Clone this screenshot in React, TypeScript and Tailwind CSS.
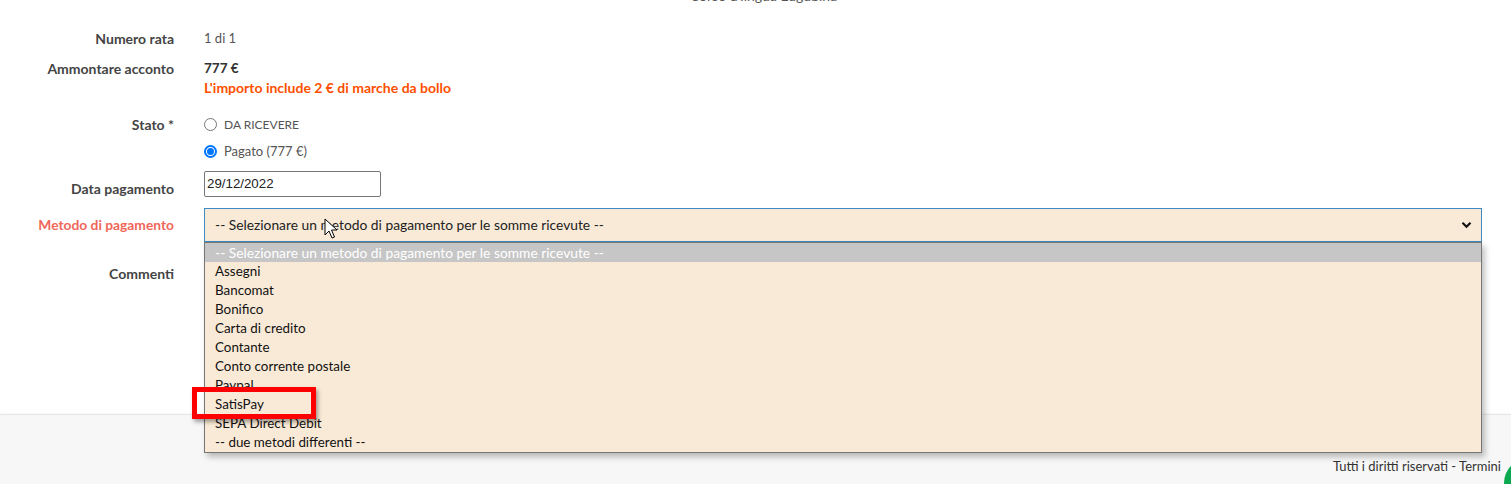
import React from "react";

const options = [
  "-- Selezionare un metodo di pagamento per le somme ricevute --",
  "Assegni",
  "Bancomat",
  "Bonifico",
  "Carta di credito",
  "Contante",
  "Conto corrente postale",
  "Paypal",
  "SatisPay",
  "SEPA Direct Debit",
  "-- due metodi differenti --",
];

function Label({ children, red }: { children: React.ReactNode; red?: boolean }) {
  return (
    <div
      className={
        red
          ? "w-[174px] shrink-0 text-right font-bold text-[13.8px] leading-[19px] text-[#f0675a]"
          : "w-[174px] shrink-0 text-right font-bold text-[14px] leading-[19px] text-[#444444]"
      }
    >
      {children}
    </div>
  );
}

export default function App() {
  return (
    <div className="relative w-[1511px] h-[484px] overflow-hidden bg-white font-['Lato',sans-serif] text-[13px] text-[#444]">
      <div className="h-[414px] flex flex-col">
        <div className="-mt-[14px] h-[19px] text-center text-[14px] leading-[19px] text-[#555] pl-[16px]">
          Corso d'lingua Eugubina
        </div>

        {/* Numero rata */}
        <div className="flex mt-[24px]">
          <Label>Numero rata</Label>
          <div className="ml-[30px] leading-[19px] text-[#555]">1 di 1</div>
        </div>

        {/* Ammontare */}
        <div className="flex mt-[11px]">
          <Label>Ammontare acconto</Label>
          <div className="ml-[30px] flex flex-col">
            <div className="leading-[19px] font-bold text-[13.5px] text-[#333]">777 €</div>
            <div className="leading-[19px] font-bold text-[14px] text-[#ff4f00]">
              L'importo include 2 € di marche da bollo
            </div>
          </div>
        </div>

        {/* Stato */}
        <div className="flex mt-[18px]">
          <Label>Stato *</Label>
          <div className="ml-[30px] flex flex-col">
            <div className="flex items-center h-[19px] gap-[7px]">
              <div className="w-[13px] h-[13px] rounded-full border border-[#767676] bg-white" />
              <span className="text-[12px] text-[#555]">DA RICEVERE</span>
            </div>
            <div className="flex items-center h-[19px] gap-[7px] mt-[8px]">
              <div className="w-[13px] h-[13px] rounded-full border-2 border-[#0075ff] bg-white flex items-center justify-center">
                <div className="w-[7px] h-[7px] rounded-full bg-[#0075ff]" />
              </div>
              <span className="text-[#555]">Pagato (777 €)</span>
            </div>
          </div>
        </div>

        {/* Data pagamento */}
        <div className="flex mt-[10px] h-[26px]">
          <div className="pt-[8px]">
            <Label>Data pagamento</Label>
          </div>
          <div className="ml-[30px]">
            <div className="w-[177px] h-[26px] border border-[#767676] rounded-[2px] pl-[2px] flex items-center font-['Liberation_Sans',sans-serif] text-[13.3px] text-[#222]">
              29/12/2022
            </div>
          </div>
        </div>

        {/* Metodo */}
        <div className="flex mt-[11px]">
          <div className="pt-[7px]">
            <Label red>Metodo di pagamento</Label>
          </div>
          <div className="ml-[30px] w-[1278px] relative z-10">
            <div className="h-[34px] bg-[#f9ead7] border border-[#3b8bc6] flex items-center pl-[10px] pr-[9px] text-[13.8px] text-[#222]">
              <span className="flex-1">-- Selezionare un metodo di pagamento per le somme ricevute --</span>
              <svg width="11" height="8" viewBox="0 0 11 8">
                <path d="M1.5 1.8 L5.5 5.8 L9.5 1.8" stroke="#111" strokeWidth="2.2" fill="none" />
              </svg>
            </div>
            <div className="absolute left-0 right-0 top-full bg-[#f9ead7] border border-[#767676] shadow-[3px_4px_6px_rgba(0,0,0,0.25)] text-[13.4px] text-[#111]">
              {options.map((o, i) => (
                <div
                  key={o}
                  className={
                    i === 0
                      ? "h-[19px] leading-[19px] pl-[10px] bg-[#c6c6c6] text-white text-[13.8px]"
                      : "h-[19px] leading-[19px] pl-[10px]"
                  }
                >
                  {o}
                </div>
              ))}
            </div>
            {/* cursor */}
            <svg className="absolute left-[120px] top-[10px]" width="14" height="22" viewBox="0 0 14 22">
              <path d="M1 1 L1 17 L5 13 L8 20 L10.5 19 L7.5 12 L13 12 Z" fill="#fff" stroke="#000" strokeWidth="1" strokeLinejoin="round" />
            </svg>
          </div>
        </div>

        {/* Commenti */}
        <div className="flex mt-[22px]">
          <Label>Commenti</Label>
          <div className="ml-[30px]" />
        </div>
      </div>

      <footer className="h-[70px] bg-[#f7f7f7] border-t border-[#e6e6e6] shadow-[0_-1px_2px_rgba(0,0,0,0.04)] flex justify-end items-start pt-[42px] pr-[10px]">
        <span className="text-[13px] leading-[19px] text-[#333]">Tutti i diritti riservati - Termini</span>
      </footer>

      {/* annotation */}
      <div className="absolute left-[192px] top-[387px] w-[124px] h-[32px] border-[5px] border-[#ff0000] shadow-[2px_3px_4px_rgba(0,0,0,0.35)] z-20" />

      {/* chat bubble */}
      <div className="absolute left-[1504px] top-[458px] w-[50px] h-[50px] rounded-full bg-[#0aa84f] z-20" />
    </div>
  );
}
